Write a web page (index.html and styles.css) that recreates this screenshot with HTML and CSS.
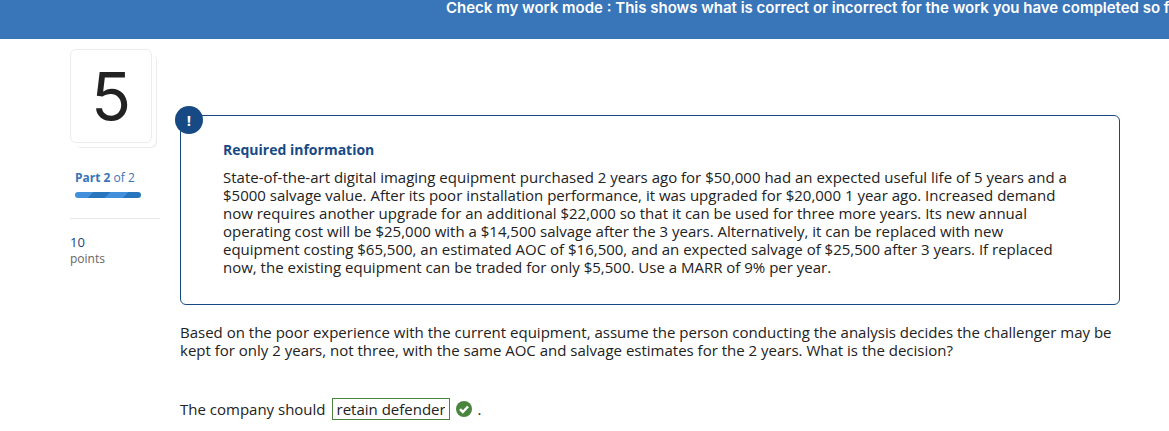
FILE: index.html
```
<!DOCTYPE html>
<html lang="en">
<head>
<meta charset="utf-8">
<meta name="viewport" content="width=device-width, initial-scale=1">
<title>Question 5</title>
<link rel="stylesheet" href="styles.css">
</head>
<body>
<header class="banner"><p class="banner-text">Check my work mode : This shows what is correct or incorrect for the work you have completed so far.</p></header>
<div class="page">
  <aside class="sidebar">
    <div class="number-card">5</div>
    <div class="part">
      <div class="part-label"><strong>Part 2</strong> of 2</div>
      <div class="progress"></div>
    </div>
    <div class="points">
      <div class="points-value">10</div>
      <div class="points-label">points</div>
    </div>
  </aside>
  <main class="question">
    <section class="info">
      <span class="info-badge">!</span>
      <h2 class="info-title">Required information</h2>
      <p class="text">State-of-the-art digital imaging equipment purchased 2 years ago for $50,000 had an expected useful life of 5 years and a<br>$5000 salvage value. After its poor installation performance, it was upgraded for $20,000 1 year ago. Increased demand<br>now requires another upgrade for an additional $22,000 so that it can be used for three more years. Its new annual<br>operating cost will be $25,000 with a $14,500 salvage after the 3 years. Alternatively, it can be replaced with new<br>equipment costing $65,500, an estimated AOC of $16,500, and an expected salvage of $25,500 after 3 years. If replaced<br>now, the existing equipment can be traded for only $5,500. Use a MARR of 9% per year.</p>
    </section>
    <p class="text prompt">Based on the poor experience with the current equipment, assume the person conducting the analysis decides the challenger may be<br>kept for only 2 years, not three, with the same AOC and salvage estimates for the 2 years. What is the decision?</p>
    <div class="text answer">
      <label for="answer">The company should</label>
      <input class="answer-box" id="answer" type="text" value="retain defender" readonly>
      <svg class="check" viewBox="0 0 16 16" role="img" aria-label="Correct"><circle cx="8" cy="8" r="8" fill="#4a853f"/><path d="M4 8.2 6.8 11 12 5.5" fill="none" stroke="#fff" stroke-width="2.5"/></svg>
      <span>.</span>
    </div>
  </main>
</div>
</body>
</html>
```
FILE: styles.css
```
* { box-sizing: border-box; }
body {
  margin: 0;
  background: #fff;
  color: #222;
  font-family: "Open Sans", sans-serif;
  font-size: 15px;
  overflow-x: hidden;
}
p, h2 { margin: 0; }
.banner {
  height: 39px;
  padding-left: 446px;
  background: #3875b9;
  overflow: hidden;
}
.banner-text {
  color: #fff;
  font-family: Inter, sans-serif;
  font-size: 15px;
  font-weight: 600;
  line-height: 16px;
  white-space: nowrap;
}
.page { display: flex; gap: 20px; padding: 10px 49px 0 70px; }
.sidebar { flex: 0 0 90px; }
.number-card {
  width: 82px;
  height: 94px;
  border: 1px solid #ececec;
  border-radius: 6px;
  background: #fff;
  box-shadow: 4px 4px 0 0 #fff, 5px 5px 0 0 #ececec;
  font-family: Inter, sans-serif;
  font-size: 66px;
  font-weight: 400;
  line-height: 92px;
  text-align: center;
}
.part {
  margin-top: 26px;
  padding: 0 19px 20px 5px;
  border-bottom: 1px solid #e8e8e8;
}
.part-label { color: #3a74b8; font-size: 12px; line-height: 18px; white-space: nowrap; }
.progress {
  height: 6px;
  margin-top: 5px;
  border-radius: 3px;
  background: linear-gradient(135deg, #4290db 0 13px, #2775bd 13px 25px, #4290db 25px 38px, #2775bd 38px);
}
.points { margin-top: 15px; line-height: 16px; }
.points-value { color: #174682; font-size: 13px; }
.points-label { color: #666; font-size: 12px; line-height: 18px; }
.question { flex: 1; min-width: 0; padding-top: 66px; }
.info {
  position: relative;
  padding: 24px 42px 28px;
  border: 1px solid #174a85;
  border-radius: 6px;
}
.info-badge {
  position: absolute;
  top: -10px;
  left: -6px;
  width: 28px;
  height: 28px;
  border-radius: 50%;
  background: #174a85;
  color: #fff;
  font-weight: 700;
  line-height: 28px;
  text-align: center;
}
.info-title { margin-bottom: 8px; color: #174a85; font-size: 14px; line-height: 20px; }
.text { font-size: 15px; line-height: 18px; white-space: nowrap; }
.prompt { margin-top: 18px; }
.answer { display: flex; align-items: center; gap: 6px; margin-top: 39px; }
.answer-box {
  width: 118px;
  height: 22px;
  padding: 0 4px;
  border: 1px solid #4a853f;
  border-radius: 0;
  background: #fff;
  color: #222;
  font: inherit;
}
.check { width: 16px; height: 16px; }
```
